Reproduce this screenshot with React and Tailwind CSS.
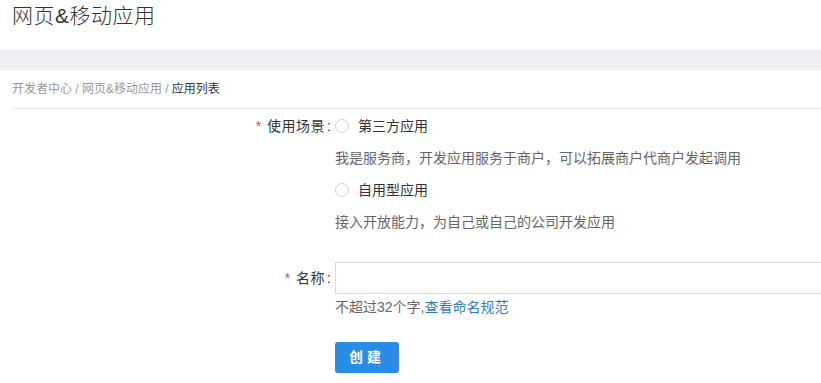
import React from "react";

const font = { fontFamily: '"Liberation Sans", "Noto Sans CJK SC", sans-serif' };

function Radio({ label }) {
  return (
    <label className="flex h-[32px] items-center text-[14px] text-[#333]">
      <span className="mr-[9px] inline-block h-[14px] w-[14px] rounded-full border border-[#d0d0d0] bg-white" />
      {label}
    </label>
  );
}

function FormRow({ label, children, className = "" }) {
  return (
    <div className={`flex ${className}`}>
      <div className="flex h-[32px] w-[323px] shrink-0 items-center justify-end pr-[4px] text-[14px] text-[#333]">
        <span className="mr-[6px] text-[#f04134]">*</span>
        <span className="tracking-[0.5px]">{label}</span>
        <span className="ml-[2px]">:</span>
      </div>
      <div className="min-w-0 flex-1">{children}</div>
    </div>
  );
}

export default function App() {
  return (
    <div className="h-[383px] w-[821px] overflow-hidden bg-white" style={font}>
      <div className="h-[50px] px-[12px] pt-[1px] text-[21px] font-light leading-[30px] tracking-[0.5px] text-[#333]">网页&amp;移动应用</div>
      <div className="h-[20px] border-y border-[#e9e9ee] bg-[#f0f0f4]" />
      <div className="pl-[12px]">
        <div className="flex h-[39px] items-center border-b border-[#e6e6e6] text-[12px] text-[#999]">
          <span>开发者中心 / 网页&amp;移动应用 / </span>
          <span className="ml-[3px] text-[#333]">应用列表</span>
        </div>
        <div className="pt-[1px]">
          <FormRow label="使用场景">
            <Radio label="第三方应用" />
            <div className="flex h-[32px] items-center text-[14px] text-[#666]">
              我是服务商，开发应用服务于商户，可以拓展商户代商户发起调用
            </div>
            <Radio label="自用型应用" />
            <div className="flex h-[32px] items-center text-[14px] text-[#666]">
              接入开放能力，为自己或自己的公司开发应用
            </div>
          </FormRow>
          <FormRow label="名称" className="mt-[24px]">
            <input className="h-[32px] w-[600px] border border-[#d9d9d9] bg-white outline-none" />
            <div className="mt-[3px] text-[14px] leading-[20px] text-[#666]">
              不超过32个字,<a className="text-[#2e7bc4]">查看命名规范</a>
            </div>
            <button className="mt-[25px] h-[31px] w-[64px] rounded-[3px] bg-[#2b8ce6] text-[14px] font-bold tracking-[4px] text-white">
              创建
            </button>
          </FormRow>
        </div>
      </div>
    </div>
  );
}
